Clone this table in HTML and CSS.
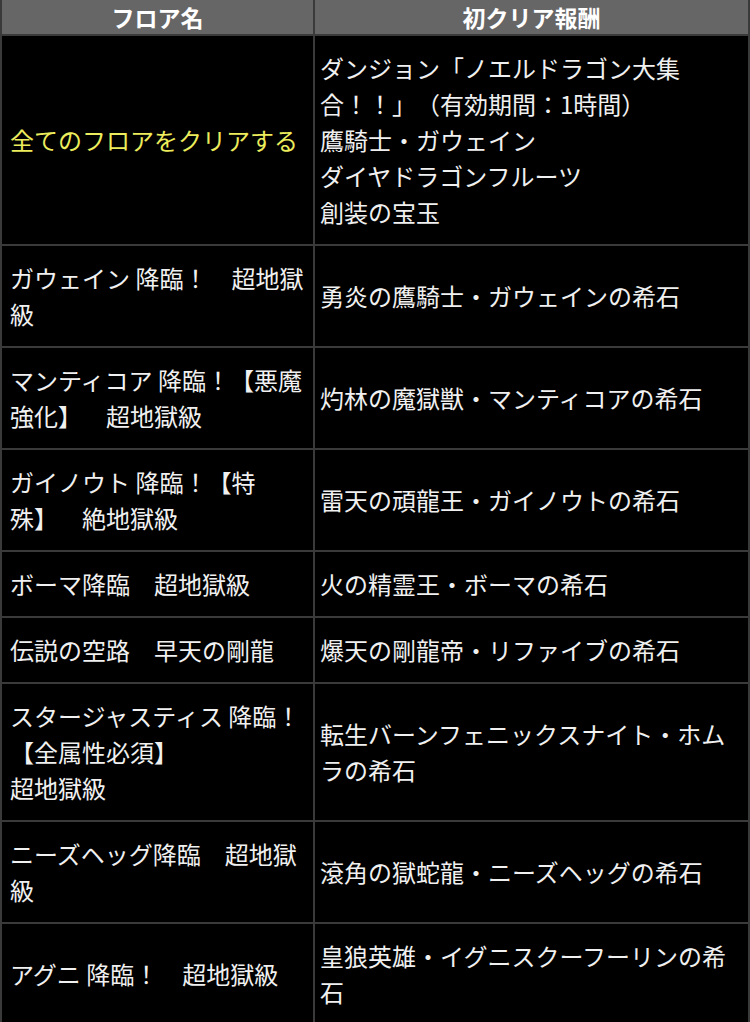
FILE: index.html
```html
<!DOCTYPE html>
<html lang="ja">
<head>
<meta charset="utf-8">
<link rel="stylesheet" href="styles.css">
</head>
<body>
<table class="rewards">
  <colgroup>
    <col class="col-floor">
    <col class="col-reward">
  </colgroup>
  <thead>
    <tr>
      <th>フロア名</th>
      <th>初クリア報酬</th>
    </tr>
  </thead>
  <tbody>
    <tr>
      <td class="floor highlight">全てのフロアをクリアする</td>
      <td>ダンジョン「ノエルドラゴン大集合！！」（有効期間：1時間）<br>鷹騎士・ガウェイン<br>ダイヤドラゴンフルーツ<br>創装の宝玉</td>
    </tr>
    <tr>
      <td class="floor">ガウェイン 降臨！　超地獄級</td>
      <td>勇炎の鷹騎士・ガウェインの希石</td>
    </tr>
    <tr>
      <td class="floor">マンティコア 降臨！【悪魔強化】　超地獄級</td>
      <td>灼林の魔獄獣・マンティコアの希石</td>
    </tr>
    <tr>
      <td class="floor">ガイノウト 降臨！【特殊】　絶地獄級</td>
      <td>雷天の頑龍王・ガイノウトの希石</td>
    </tr>
    <tr>
      <td class="floor">ボーマ降臨　超地獄級</td>
      <td>火の精霊王・ボーマの希石</td>
    </tr>
    <tr>
      <td class="floor">伝説の空路　早天の剛龍</td>
      <td>爆天の剛龍帝・リファイブの希石</td>
    </tr>
    <tr>
      <td class="floor">スタージャスティス 降臨！<br>【全属性必須】<br>超地獄級</td>
      <td>転生バーンフェニックスナイト・ホムラの希石</td>
    </tr>
    <tr>
      <td class="floor">ニーズヘッグ降臨　超地獄級</td>
      <td>滾角の獄蛇龍・ニーズヘッグの希石</td>
    </tr>
    <tr>
      <td class="floor">アグニ 降臨！　超地獄級</td>
      <td>皇狼英雄・イグニスクーフーリンの希石</td>
    </tr>
  </tbody>
</table>
</body>
</html>
```

FILE: styles.css
```css
html, body {
  margin: 0;
  padding: 0;
  background: #000;
}

body {
  width: 750px;
  height: 1022px;
  overflow: hidden;
  font-family: "Noto Sans CJK JP", "Noto Sans", sans-serif;
}

.rewards {
  width: 750px;
  border-collapse: collapse;
  table-layout: fixed;
  color: #f0f0f0;
  text-spacing-trim: space-all;
}

.col-floor {
  width: 313px;
}

.rewards th {
  background: #666;
  color: #fff;
  font-size: 23px;
  font-weight: bold;
  line-height: 32px;
  height: 34px;
  padding: 0;
  text-align: center;
  border: 2px solid #3a3a3a;
  border-top: none;
}

.rewards td {
  background: #000;
  font-size: 24px;
  line-height: 36px;
  padding: 14px 6px 14px 8px;
  border: 2px solid #3a3a3a;
  vertical-align: middle;
  text-align: left;
  text-spacing-trim: space-all;
}

.rewards td.floor {
  white-space: break-spaces;
}

.rewards td + td {
  padding-left: 5px;
}

.rewards td.highlight {
  color: #ecec5c;
}
```
